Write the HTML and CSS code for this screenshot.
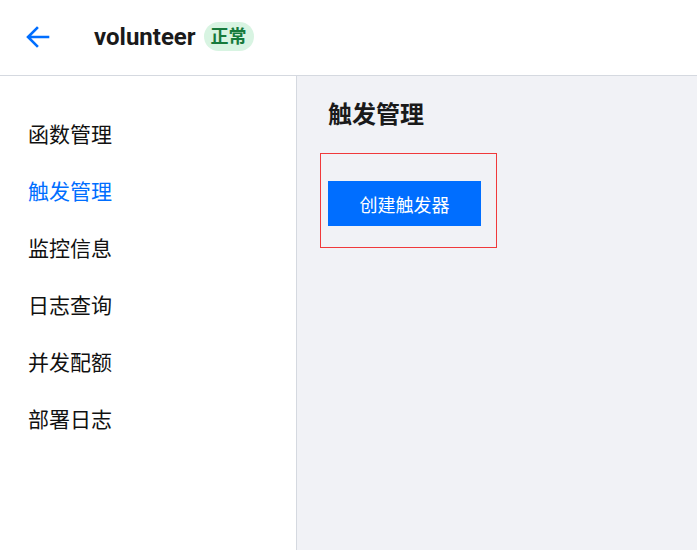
FILE: index.html
```html
<!DOCTYPE html>
<html lang="zh">
<head>
<meta charset="utf-8">
<link rel="stylesheet" href="styles.css">
</head>
<body>
<div class="page">
  <header class="header">
    <span class="back">
      <svg width="24" height="22" viewBox="0 0 24 22"><path d="M22 11H3M11 2L2 11l9 9" fill="none" stroke="#006eff" stroke-width="2.6" stroke-linecap="square"/></svg>
    </span>
    <span class="name">volunteer</span>
    <span class="badge">正常</span>
  </header>
  <div class="body">
    <nav class="side">
      <a class="item">函数管理</a>
      <a class="item active">触发管理</a>
      <a class="item">监控信息</a>
      <a class="item">日志查询</a>
      <a class="item">并发配额</a>
      <a class="item">部署日志</a>
    </nav>
    <main class="main">
      <h1 class="title">触发管理</h1>
      <div class="box">
        <button class="btn">创建触发器</button>
      </div>
    </main>
  </div>
</div>
</body>
</html>
```
FILE: styles.css
```css
* { box-sizing: border-box; }
html, body { margin: 0; padding: 0; }
body {
  font-family: Roboto, "Noto Sans CJK SC", sans-serif;
  color: #111;
  background: #fff;
}
.page { width: 697px; height: 550px; display: flex; flex-direction: column; overflow: hidden; }
.header {
  height: 76px;
  flex: none;
  display: flex;
  align-items: center;
  border-bottom: 1px solid #d5d9e0;
  padding-left: 26px;
  padding-bottom: 2px;
}
.back { display: flex; width: 24px; height: 22px; margin-right: 44px; }
.name { font-size: 24px; font-weight: 700; color: #1a1a1a; }
.badge {
  margin-left: 8px;
  background: #d8f4e2;
  color: #177a3c;
  font-weight: 700;
  font-size: 18px;
  height: 29px;
  line-height: 29px;
  padding: 0 7px;
  border-radius: 15px;
}
.body { flex: 1; display: flex; }
.side {
  width: 297px;
  flex: none;
  border-right: 1px solid #d5d9e0;
  padding-top: 31px;
  display: flex;
  flex-direction: column;
}
.item {
  height: 57px;
  line-height: 57px;
  padding-left: 28px;
  font-size: 21px;
  color: #111;
}
.item.active { color: #006eff; }
.main { flex: 1; background: #f1f2f6; padding: 22px 0 0 23px; }
.title { margin: 0; font-size: 24px; font-weight: 700; line-height: 34px; padding-left: 8px; color: #1a1a1a; }
.box {
  margin-top: 21px;
  width: 177px;
  height: 95px;
  border: 1px solid #f0393b;
  padding: 27px 0 0 7px;
}
.btn {
  width: 153px;
  height: 45px;
  border: 0;
  background: #006eff;
  color: #fff;
  font-family: inherit;
  font-size: 18px;
  padding: 0;
}
```
